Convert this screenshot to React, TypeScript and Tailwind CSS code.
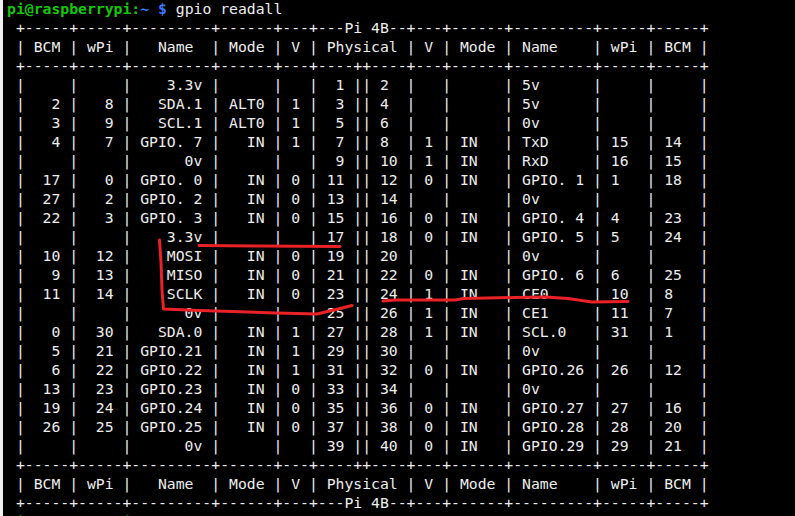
import React from "react";

const table = [
  " +-----+-----+---------+------+---+---Pi 4B--+---+------+---------+-----+-----+",
  " | BCM | wPi |   Name  | Mode | V | Physical | V | Mode | Name    | wPi | BCM |",
  " +-----+-----+---------+------+---+----++----+---+------+---------+-----+-----+",
  " |     |     |    3.3v |      |   |  1 || 2  |   |      | 5v      |     |     |",
  " |   2 |   8 |   SDA.1 | ALT0 | 1 |  3 || 4  |   |      | 5v      |     |     |",
  " |   3 |   9 |   SCL.1 | ALT0 | 1 |  5 || 6  |   |      | 0v      |     |     |",
  " |   4 |   7 | GPIO. 7 |   IN | 1 |  7 || 8  | 1 | IN   | TxD     | 15  | 14  |",
  " |     |     |      0v |      |   |  9 || 10 | 1 | IN   | RxD     | 16  | 15  |",
  " |  17 |   0 | GPIO. 0 |   IN | 0 | 11 || 12 | 0 | IN   | GPIO. 1 | 1   | 18  |",
  " |  27 |   2 | GPIO. 2 |   IN | 0 | 13 || 14 |   |      | 0v      |     |     |",
  " |  22 |   3 | GPIO. 3 |   IN | 0 | 15 || 16 | 0 | IN   | GPIO. 4 | 4   | 23  |",
  " |     |     |    3.3v |      |   | 17 || 18 | 0 | IN   | GPIO. 5 | 5   | 24  |",
  " |  10 |  12 |    MOSI |   IN | 0 | 19 || 20 |   |      | 0v      |     |     |",
  " |   9 |  13 |    MISO |   IN | 0 | 21 || 22 | 0 | IN   | GPIO. 6 | 6   | 25  |",
  " |  11 |  14 |    SCLK |   IN | 0 | 23 || 24 | 1 | IN   | CE0     | 10  | 8   |",
  " |     |     |      0v |      |   | 25 || 26 | 1 | IN   | CE1     | 11  | 7   |",
  " |   0 |  30 |   SDA.0 |   IN | 1 | 27 || 28 | 1 | IN   | SCL.0   | 31  | 1   |",
  " |   5 |  21 | GPIO.21 |   IN | 1 | 29 || 30 |   |      | 0v      |     |     |",
  " |   6 |  22 | GPIO.22 |   IN | 1 | 31 || 32 | 0 | IN   | GPIO.26 | 26  | 12  |",
  " |  13 |  23 | GPIO.23 |   IN | 0 | 33 || 34 |   |      | 0v      |     |     |",
  " |  19 |  24 | GPIO.24 |   IN | 0 | 35 || 36 | 0 | IN   | GPIO.27 | 27  | 16  |",
  " |  26 |  25 | GPIO.25 |   IN | 0 | 37 || 38 | 0 | IN   | GPIO.28 | 28  | 20  |",
  " |     |     |      0v |      |   | 39 || 40 | 0 | IN   | GPIO.29 | 29  | 21  |",
  " +-----+-----+---------+------+---+----++----+---+------+---------+-----+-----+",
  " | BCM | wPi |   Name  | Mode | V | Physical | V | Mode | Name    | wPi | BCM |",
  " +-----+-----+---------+------+---+---Pi 4B--+---+------+---------+-----+-----+",
];

function Prompt({ cmd }: { cmd?: string }) {
  return (
    <div>
      <span className="font-bold text-[#16c60c]">pi@raspberrypi:</span>
      <span className="font-bold text-[#3b78ff]">~ $</span>
      {cmd ? <span> {cmd}</span> : null}
    </div>
  );
}

// red marker scribbles drawn over the screenshot
function Scribbles() {
  return (
    <svg className="absolute inset-0 pointer-events-none" width="795" height="516" viewBox="0 0 795 516">
      <g fill="none" stroke="#ea2227" strokeWidth="3" strokeLinecap="round" strokeLinejoin="round">
        <path d="M199 245.5 L260 246 L340 246.5" />
        <path d="M159.5 240 L161 262 L162 290 L163.5 309 L200 310.5 L276 313 L317 314 L334 310 L352 305.5" />
        <path d="M383 301 L395 300 L455 300 L464 298.5 L515 297.5 L545 297 L568 298.5 L592 302 L628 301.5" />
      </g>
    </svg>
  );
}

export default function App() {
  return (
    <div className="relative flex w-[795px] h-[516px] overflow-hidden bg-black">
      <div className="w-[3px] h-full bg-[#f0f0f0]" />
      <div className="flex-1 pl-[4px] -mt-[1px] text-[#eeeeee] font-['DejaVu_Sans_Mono',monospace] text-[14.75px] leading-[19px] whitespace-pre">
        <Prompt cmd="gpio readall" />
        {table.map((l, i) => (
          <div key={i}>{l}</div>
        ))}
        <Prompt />
      </div>
      <Scribbles />
    </div>
  );
}
